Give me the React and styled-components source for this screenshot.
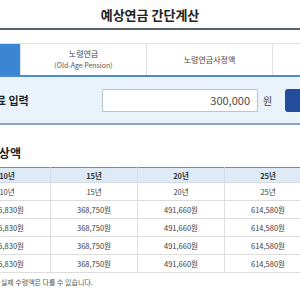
import React from 'react';
import styled, { createGlobalStyle } from 'styled-components';

const GlobalStyle = createGlobalStyle`
    html, body {
        margin: 0;
        padding: 0;
        background: #ffffff;
        overflow: hidden;
    }
    body {
        font-family: "Noto Sans CJK KR", "Noto Sans", sans-serif;
        color: #333333;
    }
`;

// 원래 페이지는 화면보다 넓어서 좌우가 잘려 보임
const Page = styled.div`
    width: 510px;
    margin-left: -105px;
`;

const Title = styled.h1`
    margin: 0;
    height: 28px;
    line-height: 29px;
    font-size: 13px;
    font-weight: 700;
    text-align: center;
    color: #222222;
    border-bottom: 2px solid #56606d;
`;

const TabList = styled.div`
    display: flex;
    margin-top: 13px;
    border-top: 1px solid #e1e1e1;
    border-bottom: 2px solid #4b8bd0;
`;

const Tab = styled.div`
    width: 126px;
    height: 31px;
    display: flex;
    flex-direction: column;
    align-items: center;
    justify-content: center;
    background: ${(props) => (props.active ? '#3a86d2' : '#ffffff')};
    color: ${(props) => (props.active ? '#ffffff' : '#444444')};
    border-right: 1px solid #e3e3e3;
    box-sizing: border-box;
    font-size: 8px;
    line-height: 12px;
`;

const TabSub = styled.span`
    font-size: 7px;
    line-height: 11px;
    color: #555555;
`;

const InputBand = styled.div`
    display: flex;
    align-items: center;
    height: 46px;
    padding-left: 68px;
    background: #eaf3fc;
    border-bottom: 2px solid #88a4c6;
`;

const InputLabel = styled.label`
    width: 139px;
    flex-shrink: 0;
    font-size: 11px;
    font-weight: 700;
    color: #222222;
    white-space: nowrap;
`;

const AmountInput = styled.input`
    width: 156px;
    height: 23px;
    box-sizing: border-box;
    padding: 0 7px;
    border: 1px solid #b7c4d3;
    background: #ffffff;
    text-align: right;
    font-family: "Noto Sans CJK KR", "Noto Sans", sans-serif;
    font-size: 11px;
    color: #4a4a4a;
    outline: none;
`;

const Unit = styled.span`
    margin-left: 5px;
    font-size: 10px;
    color: #444444;
`;

const CalcButton = styled.button`
    margin-left: 13px;
    width: 90px;
    height: 23px;
    flex-shrink: 0;
    border: none;
    border-radius: 3px;
    background: #234c9c;
    color: #ffffff;
    font-family: "Noto Sans CJK KR", "Noto Sans", sans-serif;
    font-size: 10px;
`;

const Section = styled.section`
    padding-left: 68px;
`;

const SectionTitle = styled.h2`
    margin: 20px 0 0;
    font-size: 12px;
    line-height: 16px;
    font-weight: 700;
    color: #222222;
`;

const Table = styled.table`
    margin-top: 6px;
    border-collapse: collapse;
    table-layout: fixed;
    width: 436px;
    font-size: 7.5px;
    color: #3c3c3c;
    border-top: 1px solid #7489a6;
`;

const HeadCell = styled.th`
    height: 14px;
    padding: 0;
    background: #dfeaf7;
    font-weight: 700;
    color: #333333;
    border: 1px solid #d3dbe5;
    border-top: none;
    width: ${(props) => props.w}px;
`;

const Cell = styled.td`
    height: 17px;
    padding: 0;
    text-align: center;
    border: 1px solid #dddddd;
`;

const Note = styled.p`
    margin: 4px 0 0;
    font-size: 7px;
    color: #555555;
    white-space: nowrap;
`;

const periods = ['10년', '15년', '20년', '25년', '30년'];
const amounts = ['245,830원', '368,750원', '491,660원', '614,580원', '737,500원'];
const rows = [amounts, amounts, amounts, amounts];

const App = () => {
    return (
        <>
            <GlobalStyle />
            <Page>
                <Title>예상연금 간단계산</Title>
                <TabList>
                    <Tab active>간단계산</Tab>
                    <Tab>
                        노령연금
                        <TabSub>(Old-Age Pension)</TabSub>
                    </Tab>
                    <Tab>노령연금사정액</Tab>
                    <Tab>장애연금</Tab>
                </TabList>
                <InputBand>
                    <InputLabel htmlFor='amount'>월 보험료 입력</InputLabel>
                    <AmountInput id='amount' defaultValue='300,000' />
                    <Unit>원</Unit>
                    <CalcButton>계산하기</CalcButton>
                </InputBand>
                <Section>
                    <SectionTitle>연금 예상액</SectionTitle>
                    <Table>
                        <thead>
                            <tr>
                                {periods.map((p) => (
                                    <HeadCell key={p} w={85}>
                                        {p}
                                    </HeadCell>
                                ))}
                            </tr>
                        </thead>
                        <tbody>
                            <tr>
                                {periods.map((p) => (
                                    <Cell key={p}>{p}</Cell>
                                ))}
                            </tr>
                            {rows.map((row, i) => (
                                <tr key={i}>
                                    {row.map((v, j) => (
                                        <Cell key={j}>{v}</Cell>
                                    ))}
                                </tr>
                            ))}
                        </tbody>
                    </Table>
                    <Note>※ 예시이며, 실제 수령액은 다를 수 있습니다.</Note>
                </Section>
            </Page>
        </>
    );
};

export default App;
